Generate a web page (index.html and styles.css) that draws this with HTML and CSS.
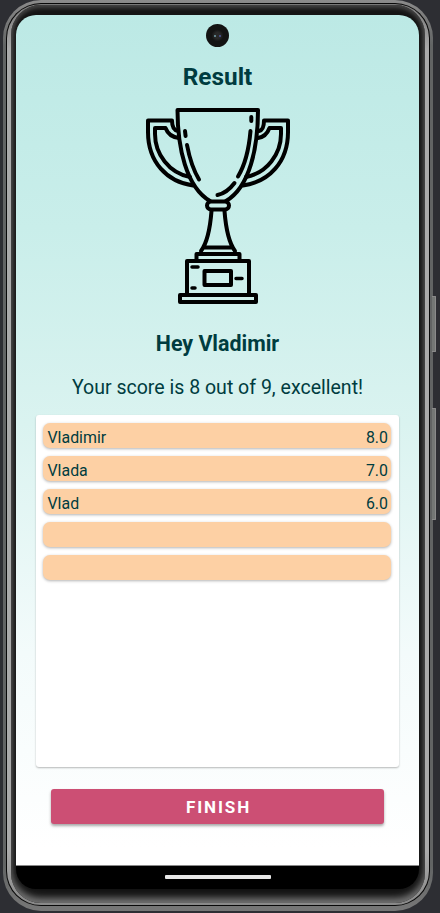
FILE: index.html
```html
<!DOCTYPE html>
<html lang="en">
<head>
<meta charset="utf-8">
<title>Result</title>
<link rel="stylesheet" href="styles.css">
</head>
<body>
<div class="phone">
  <span class="side-key power"></span>
  <span class="side-key volume"></span>
  <div class="rim"><div class="metal"><div class="bezel">
    <main class="screen">
      <span class="camera"></span>
      <section class="content">
        <h1 class="title">Result</h1>
        <svg class="trophy" viewBox="145 106 146 199" fill="none" stroke="#000" stroke-width="4" stroke-linecap="round" stroke-linejoin="round">
          <path d="M210 201C186 187 177.500 147 177.500 110H258C258 147 250 187 226 201"/>
          <path d="M178 131Q172 130 172 120.500H148V132C148 162 167 182 193 185.500"/>
          <path d="M179 138Q169 137 165.500 128H155V134C155 154 169 173 190 177"/>
          <path d="M259 131Q264 130 264 120.500H288V132C288 162 269 182 243 185.500"/>
          <path d="M258 138Q266 137 269.500 128H281V134C281 154 267 173 246 177"/>
          <path d="M185 131L185.600 136M187 145Q191 166 199 179.500M251.300 117V121M250.500 131Q248 160 238 176.500M234.500 183Q227 193 217.500 195"/>
          <rect x="207" y="201.500" width="22" height="8" rx="4"/>
          <path d="M211.500 211C210 230 207 243 201 251M224.500 211C226 230 229 243 235 251M204 247.500H232"/>
          <path d="M196.500 259V254H239.500V259M187 294V261H249V294"/>
          <path d="M204.500 271H231V285H204.500ZM180 295H256V302H180Z" />
          <path d="M192 267H198M192 288H195M236 278.500H242" stroke-width="3.500"/>
        </svg>
        <h2 class="greeting">Hey Vladimir</h2>
        <p class="score">Your score is 8 out of 9, excellent!</p>
        <div class="board">
          <div class="row"><span>Vladimir</span><span>8.0</span></div>
          <div class="row"><span>Vlada</span><span>7.0</span></div>
          <div class="row"><span>Vlad</span><span>6.0</span></div>
          <div class="row"></div>
          <div class="row"></div>
        </div>
        <button class="finish">FINISH</button>
      </section>
      <footer class="navbar"><span class="pill"></span></footer>
    </main>
  </div></div></div>
</div>
</body>
</html>
```
FILE: styles.css
```css
* { box-sizing: border-box; }
body {
  margin: 0;
  width: 440px;
  height: 913px;
  overflow: hidden;
  background: #2d2e33;
  font-family: Roboto, "Liberation Sans", sans-serif;
  color: #003c40;
}
.phone {
  position: relative;
  width: 430px;
  height: 911px;
  margin-left: 3px;
  padding: 3px;
  border-radius: 38px;
  background: linear-gradient(#8b8b8b, #626464 5%, #626464 95%, #777);
}
.side-key {
  position: absolute;
  left: 429px;
  width: 4px;
  background: #747775;
  border: 1px solid #8a8a8a;
  border-left: 0;
  border-radius: 0 1px 1px 0;
}
.power { top: 296px; height: 56px; }
.volume { top: 408px; height: 112px; }
.rim {
  height: 903px;
  padding: 1px;
  background: #080808;
  border-radius: 35px;
}
.metal {
  height: 901px;
  padding: 1px 4px 2px;
  background: linear-gradient(#777, #aaa 5%, #aaa 94%, #888);
  border-radius: 34px;
}
.bezel {
  height: 898px;
  padding: 10px 5px 14px;
  background: #141414;
  box-shadow: inset 0 3px 4px #454545, inset 0 -5px 7px #777;
  border-radius: 30px;
  display: flex;
}
.screen {
  position: relative;
  flex: none;
  width: 403px;
  height: 874px;
  border-radius: 20px;
  overflow: hidden;
  background: #000;
}
.camera {
  position: absolute;
  left: 190px;
  top: 9px;
  width: 23px;
  height: 23px;
  border-radius: 50%;
  background:
    radial-gradient(circle at 9px 12px, #60818a 0 1px, transparent 1.500px),
    radial-gradient(circle at 14px 12px, #454b80 0 1px, transparent 1.500px),
    radial-gradient(circle, #292929 0 3px, #131313 6px);
}
.content {
  height: 851px;
  padding: 46px 20px 0;
  display: flex;
  flex-direction: column;
  align-items: center;
  background: linear-gradient(#bce9e5, #c9eeea 25%, #daf3f0 48%, #f3fbfb 75%, #fff 98%);
  border-bottom: 1px solid #888;
}
.title {
  margin: 0;
  font-size: 24.400px;
  line-height: 32px;
  font-weight: 700;
}
.trophy {
  width: 146px;
  height: 199px;
  margin-top: 13px;
}
.greeting {
  margin: 25px 0 0;
  font-size: 21.400px;
  line-height: 28px;
  font-weight: 700;
}
.score {
  margin: 17px 0 0;
  font-size: 19.550px;
  line-height: 26px;
  white-space: nowrap;
}
.board {
  flex: none;
  width: 363px;
  height: 352px;
  margin-top: 14px;
  padding: 8px 8px 8px 7px;
  display: flex;
  flex-direction: column;
  gap: 8px;
  background: #fff;
  border-radius: 3px;
  box-shadow: 0 1px 2px rgba(0, 0, 0, .28);
}
.row {
  height: 25px;
  padding: 3px 3px 0 4.500px;
  display: flex;
  justify-content: space-between;
  font-size: 15.900px;
  line-height: 24px;
  background: #fdd0a4;
  border-radius: 7px;
  box-shadow: 0 1px 3px rgba(0, 0, 0, .3);
}
.finish {
  flex: none;
  width: 333px;
  height: 35px;
  margin-top: 22px;
  padding: 1px 0 0 2px;
  border: 0;
  border-radius: 3px;
  background: #cc4f74;
  color: #fff;
  font: 700 17px/32px Roboto, sans-serif;
  letter-spacing: 1.900px;
  box-shadow: 0 2px 3px rgba(0, 0, 0, .35);
}
.navbar {
  height: 23px;
  display: flex;
  justify-content: center;
  padding-top: 9px;
}
.pill {
  width: 106px;
  height: 4px;
  border-radius: 1px;
  background: #e8e8e8;
}
```
